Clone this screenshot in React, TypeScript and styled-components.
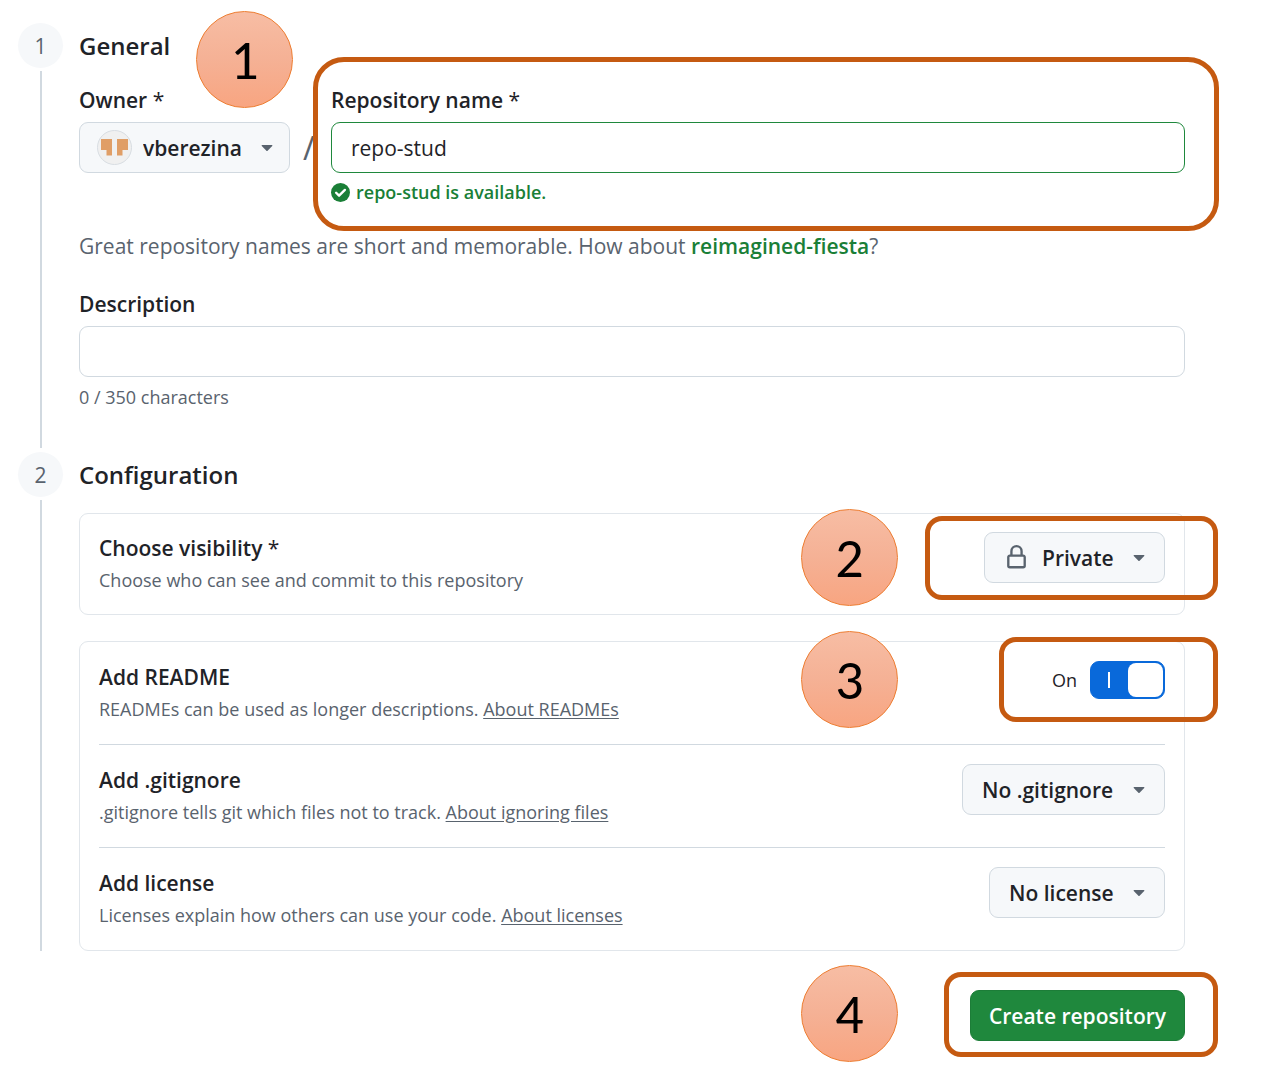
import React, { useState } from "react";
import styled, { createGlobalStyle } from "styled-components";

const color = {
  text: "#1f2328",
  muted: "#59636e",
  border: "#d1d9e0",
  softBorder: "#e1e6eb",
  surface: "#f6f8fa",
  green: "#1a7f37",
  greenButton: "#1f883d",
  blue: "#0969da",
  callout: "#c55a11",
};

const GlobalStyle = createGlobalStyle`
  *, *::before, *::after { box-sizing: border-box; }
  body {
    margin: 0;
    background: #fff;
    color: ${color.text};
    font-family: "Segoe UI", "Open Sans", "Noto Sans", sans-serif;
    font-size: 21px;
  }
  input, select, button { font: inherit; color: inherit; margin: 0; }
`;

const Form = styled.form`
  display: flex;
  flex-direction: column;
  gap: 4px;
  padding: 23px 76px 34px 18px;
`;

const Section = styled.section`
  display: flex;
  gap: 16px;
`;

const Rail = styled.div`
  display: flex;
  flex-direction: column;
  align-items: center;
  gap: 3px;
  flex: none;
  width: 45px;
`;

const Step = styled.span`
  display: grid;
  place-items: center;
  width: 45px;
  height: 45px;
  border-radius: 50%;
  background: ${color.surface};
  color: ${color.muted};
`;

const Line = styled.span`
  flex: 1;
  width: 2px;
  background: ${color.border};
`;

const Content = styled.div<{ $end?: number }>`
  position: relative;
  flex: 1;
  min-width: 0;
  padding-bottom: ${(p) => p.$end ?? 0}px;
`;

const Heading = styled.h2`
  margin: 0 0 15px;
  font-size: 24px;
  font-weight: 600;
  line-height: 46px;
`;

const Fields = styled.div`
  display: flex;
  align-items: flex-start;
`;

const Field = styled.div<{ $grow?: boolean }>`
  position: relative;
  display: flex;
  flex-direction: column;
  flex: ${(p) => (p.$grow ? "1" : "none")};
`;

const Label = styled.label`
  margin-bottom: 6px;
  font-size: 21px;
  font-weight: 600;
  line-height: 32px;
`;

const Required = styled.span`
  font-weight: 400;
`;

const TextBox = styled.input<{ $valid?: boolean }>`
  width: 100%;
  height: 51px;
  padding: 0 19px;
  border: 1px solid ${(p) => (p.$valid ? color.greenButton : color.border)};
  border-radius: 9px;
  background: #fff;
  outline: none;
`;

const Slash = styled.span`
  align-self: flex-start;
  width: 41px;
  padding: 38px 0 0 13px;
  color: ${color.muted};
  font-size: 32px;
  line-height: 51px;
`;

const Valid = styled.p`
  display: flex;
  align-items: center;
  gap: 6px;
  margin: 5px 0 0;
  color: ${color.green};
  font-size: 18px;
  font-weight: 600;
  line-height: 28px;
`;

const Hint = styled.p`
  margin: 24px 0 26px;
  color: ${color.muted};
  line-height: 32px;
`;

const Suggestion = styled.button`
  padding: 0;
  border: 0;
  background: none;
  color: ${color.green};
  font-weight: 600;
`;

const Counter = styled.span`
  margin-top: 6px;
  color: ${color.muted};
  font-size: 18px;
  line-height: 28px;
`;

const Card = styled.div`
  border: 1px solid ${color.softBorder};
  border-radius: 9px;
  padding: 0 19px;

  & + & { margin-top: 26px; }
`;

const Row = styled.div<{ $short?: boolean }>`
  position: relative;
  display: flex;
  justify-content: space-between;
  align-items: flex-start;
  min-height: ${(p) => (p.$short ? 100 : 102)}px;
  padding: ${(p) => (p.$short ? 18 : 19)}px 0 16px;

  & + & {
    border-top: 1px solid ${color.border};
    min-height: 103px;
  }
`;

const RowLabel = styled.label`
  display: block;
  font-weight: 600;
  line-height: 32px;
`;

const RowText = styled.p`
  margin: 0;
  color: ${color.muted};
  font-size: 18px;
  line-height: 32px;

  a { color: inherit; text-underline-offset: 2px; }
`;

const Anchor = styled.div`
  position: relative;
  display: flex;
  align-items: center;
`;

const Picker = styled.span`
  display: flex;
  align-items: center;
  height: 51px;
  padding: 0 19px;
  border: 1px solid ${color.border};
  border-radius: 9px;
  background: ${color.surface};

  select {
    appearance: none;
    padding: 0;
    border: 0;
    outline: none;
    background: transparent;
    font-weight: 600;
    line-height: 32px;
  }
`;

const OwnerPicker = styled(Picker)`
  width: 211px;
  padding-left: 17px;
`;

const Glyph = styled.svg<{ $gap?: number }>`
  display: block;
  flex: none;
  margin-right: ${(p) => p.$gap ?? 0}px;
`;

const CaretGlyph = styled.svg`
  display: block;
  flex: none;
  margin-left: 19px;
  pointer-events: none;
`;

const SwitchLabel = styled.label`
  margin-right: 13px;
  font-size: 18px;
`;

const Switch = styled.input`
  appearance: none;
  display: flex;
  align-items: center;
  justify-content: flex-end;
  width: 75px;
  height: 38px;
  padding: 1px;
  border: 1px solid ${color.blue};
  border-radius: 9px;
  background: ${color.blue};

  &::before {
    content: "";
    width: 2px;
    height: 16px;
    margin-right: 18px;
    background: #fff;
  }
  &::after {
    content: "";
    width: 35px;
    height: 34px;
    border-radius: 8px;
    background: #fff;
  }
  &:not(:checked) {
    flex-direction: row-reverse;
    border-color: ${color.border};
    background: ${color.muted};
  }
`;

const Actions = styled.div`
  position: relative;
  display: flex;
  justify-content: flex-end;
  margin: 35px 0 0 61px;
`;

const Submit = styled.button`
  height: 51px;
  padding: 0 18px;
  border: 1px solid #1c7d38;
  border-radius: 9px;
  background: ${color.greenButton};
  color: #fff;
  font-weight: 600;
`;

const Ring = styled.span<{ $inset: string; $radius?: number }>`
  position: absolute;
  inset: ${(p) => p.$inset};
  border: 5px solid ${color.callout};
  border-radius: ${(p) => p.$radius ?? 17}px;
  pointer-events: none;
`;

const Badge = styled.span<{ $top: number; $left?: number; $right?: number }>`
  position: absolute;
  top: ${(p) => p.$top}px;
  left: ${(p) => (p.$left === undefined ? "auto" : `${p.$left}px`)};
  right: ${(p) => (p.$right === undefined ? "auto" : `${p.$right}px`)};
  display: grid;
  place-items: center;
  width: 97px;
  height: 97px;
  border: 1px solid #ed7d31;
  border-radius: 50%;
  background: linear-gradient(#f7bda4, #f5b195 50%, #f8a581);
  color: #000;
  font-family: Calibri, Carlito, "Open Sans", sans-serif;
  font-size: 56px;
  line-height: 60px;
  pointer-events: none;
`;

const Caret = () => (
  <CaretGlyph width="12" height="6" viewBox="0 0 14 7" aria-hidden="true">
    <path d="M1.400 0h11.200c.7 0 1 .8.5 1.300L7.700 6.600a1 1 0 0 1-1.400 0L.9 1.300C.4.800.7 0 1.400 0Z" fill={color.muted} />
  </CaretGlyph>
);

const Avatar = () => (
  <Glyph $gap={11} width="35" height="35" viewBox="0 0 35 35" aria-hidden="true">
    <circle cx="17.500" cy="17.500" r="17" fill="#f0f0f0" stroke="#d8dde2" />
    <path d="M4 9h11v16.500H9.500v-5.500H4ZM20 9h11v11h-5.500v5.500H20Z" fill="#e09e66" />
  </Glyph>
);

const CheckCircle = () => (
  <Glyph width="19" height="19" viewBox="0 0 16 16" aria-hidden="true">
    <circle cx="8" cy="8" r="8" fill={color.green} />
    <path d="m4.300 8.200 2.500 2.500 4.900-4.900" fill="none" stroke="#fff" strokeWidth="2" strokeLinecap="round" strokeLinejoin="round" />
  </Glyph>
);

const Lock = () => (
  <Glyph $gap={13} width="25" height="25" viewBox="0 0 16 16" fill={color.muted} aria-hidden="true">
    <path d="M4 4a4 4 0 0 1 8 0v2h.250c.966 0 1.750.784 1.750 1.750v5.500A1.750 1.750 0 0 1 12.250 15h-8.500A1.750 1.750 0 0 1 2 13.250v-5.500C2 6.784 2.784 6 3.750 6H4Zm8.250 3.500h-8.500a.25.25 0 0 0-.25.25v5.500c0 .138.112.25.25.25h8.500a.25.25 0 0 0 .25-.25v-5.500a.25.25 0 0 0-.25-.25ZM10.500 6V4a2.500 2.500 0 1 0-5 0v2Z" />
  </Glyph>
);

export default function App() {
  const [name, setName] = useState("repo-stud");
  const [description, setDescription] = useState("");
  const [readme, setReadme] = useState(true);

  return (
    <>
      <GlobalStyle />
      <Form onSubmit={(e) => e.preventDefault()}>
        <Section>
          <Rail>
            <Step>1</Step>
            <Line />
          </Rail>
          <Content $end={37}>
            <Heading>General</Heading>
            <Badge $top={-12} $left={117}>1</Badge>
            <Fields>
              <Field>
                <Label htmlFor="owner">Owner <Required>*</Required></Label>
                <OwnerPicker>
                  <Avatar />
                  <select id="owner">
                    <option>vberezina</option>
                  </select>
                  <Caret />
                </OwnerPicker>
              </Field>
              <Slash>/</Slash>
              <Field $grow>
                <Label htmlFor="name">Repository name <Required>*</Required></Label>
                <TextBox id="name" $valid value={name} onChange={(e) => setName(e.target.value)} />
                <Valid>
                  <CheckCircle />
                  {name} is available.
                </Valid>
                <Ring $inset="-27px -34px -25px -18px" $radius={31} />
              </Field>
            </Fields>
            <Hint>
              Great repository names are short and memorable. How about{" "}
              <Suggestion type="button" onClick={() => setName("reimagined-fiesta")}>
                reimagined-fiesta
              </Suggestion>
              ?
            </Hint>
            <Field>
              <Label htmlFor="description">Description</Label>
              <TextBox
                id="description"
                maxLength={350}
                value={description}
                onChange={(e) => setDescription(e.target.value)}
              />
              <Counter>{description.length} / 350 characters</Counter>
            </Field>
          </Content>
        </Section>

        <Section>
          <Rail>
            <Step>2</Step>
            <Line />
          </Rail>
          <Content>
            <Heading>Configuration</Heading>
            <Card>
              <Row $short>
                <div>
                  <RowLabel htmlFor="visibility">Choose visibility <Required>*</Required></RowLabel>
                  <RowText>Choose who can see and commit to this repository</RowText>
                </div>
                <Badge $top={-5} $right={267}>2</Badge>
                <Anchor>
                  <Picker>
                    <Lock />
                    <select id="visibility">
                      <option>Private</option>
                    </select>
                    <Caret />
                  </Picker>
                  <Ring $inset="-16px -53px -17px -59px" />
                </Anchor>
              </Row>
            </Card>
            <Card>
              <Row>
                <div>
                  <RowLabel htmlFor="readme">Add README</RowLabel>
                  <RowText>
                    READMEs can be used as longer descriptions. <a href="#readmes">About READMEs</a>
                  </RowText>
                </div>
                <Badge $top={-11} $right={267}>3</Badge>
                <Anchor>
                  <SwitchLabel htmlFor="readme">{readme ? "On" : "Off"}</SwitchLabel>
                  <Switch
                    id="readme"
                    type="checkbox"
                    role="switch"
                    checked={readme}
                    onChange={(e) => setReadme(e.target.checked)}
                  />
                  <Ring $inset="-24px -53px -23px -53px" />
                </Anchor>
              </Row>
              <Row>
                <div>
                  <RowLabel htmlFor="gitignore">Add .gitignore</RowLabel>
                  <RowText>
                    .gitignore tells git which files not to track. <a href="#ignoring">About ignoring files</a>
                  </RowText>
                </div>
                <Picker>
                  <select id="gitignore">
                    <option>No .gitignore</option>
                  </select>
                  <Caret />
                </Picker>
              </Row>
              <Row>
                <div>
                  <RowLabel htmlFor="license">Add license</RowLabel>
                  <RowText>
                    Licenses explain how others can use your code. <a href="#licenses">About licenses</a>
                  </RowText>
                </div>
                <Picker>
                  <select id="license">
                    <option>No license</option>
                  </select>
                  <Caret />
                </Picker>
              </Row>
            </Card>
          </Content>
        </Section>

        <Actions>
          <Badge $top={-25} $right={287}>4</Badge>
          <Anchor>
            <Submit type="submit">Create repository</Submit>
            <Ring $inset="-18px -33px -16px -26px" />
          </Anchor>
        </Actions>
      </Form>
    </>
  );
}
